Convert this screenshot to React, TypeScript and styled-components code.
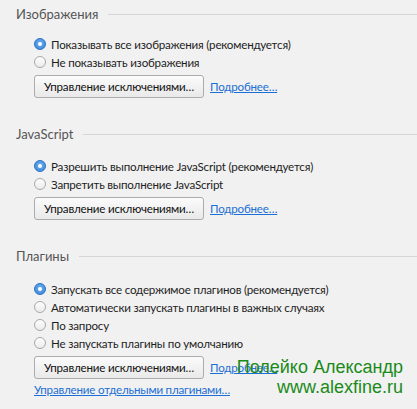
import styled, { createGlobalStyle } from "styled-components";

const GlobalStyle = createGlobalStyle`
  html, body {
    margin: 0;
    padding: 0;
    background: #f0f0f0;
  }
  body {
    font-family: Lato, "Noto Sans", sans-serif;
    font-size: 11.6px;
    letter-spacing: -0.2px;
    color: #1e1e1e;
  }
`

const Page = styled.div`
  position: relative;
  width: 417px;
  height: 409px;
  overflow: hidden;
  box-sizing: border-box;
  padding: 6px 0 0 16px;
  background: #f1f1f1;
`

const Section = styled.section`
  margin-bottom: 28px;
`

const TitleRow = styled.div`
  display: flex;
  align-items: center;
  gap: 10px;
  height: 16px;
`

const Title = styled.h3`
  margin: 0;
  font-weight: 400;
  font-size: 13px;
  letter-spacing: 0;
  line-height: 16px;
  color: #555;
  white-space: nowrap;
`

const Rule = styled.div`
  flex: 1;
  height: 1px;
  background: #d6d6d6;
`

const Body = styled.div<{ $top: number }>`
  display: flex;
  flex-direction: column;
  padding: ${p => p.$top}px 0 0 18px;
`

const Option = styled.label`
  display: flex;
  align-items: center;
  gap: 5px;
  height: 18px;
  white-space: nowrap;
`

const Radio = styled.span<{ $on?: boolean }>`
  position: relative;
  flex: none;
  box-sizing: border-box;
  width: 12px;
  height: 12px;
  border-radius: 50%;
  border: 1px solid ${p => (p.$on ? "#2c6fc4" : "#a8a8a8")};
  background: ${p =>
    p.$on
      ? "radial-gradient(circle at 50% 40%, #6aaef0, #3a86dc)"
      : "linear-gradient(#fdfdfd, #ececec)"};
  &::after {
    content: "";
    display: ${p => (p.$on ? "block" : "none")};
    position: absolute;
    left: 3px;
    top: 3px;
    width: 4px;
    height: 4px;
    border-radius: 50%;
    background: #fff;
  }
`

const Actions = styled.div`
  display: flex;
  align-items: center;
  gap: 6px;
  margin-top: 4px;
`

const Button = styled.button`
  box-sizing: border-box;
  width: 170px;
  height: 23px;
  padding: 0;
  border: 1px solid #acacac;
  border-radius: 3px;
  background: linear-gradient(#fbfbfb, #e9e9e9);
  font: inherit;
  letter-spacing: inherit;
  color: #111;
  white-space: nowrap;
`

const Link = styled.a`
  color: #1c6fd4;
  text-decoration: underline;
  cursor: pointer;
  white-space: nowrap;
`

const LinkRow = styled.div`
  margin-top: 4px;
  line-height: 14px;
`

const Watermark = styled.div`
  position: absolute;
  right: 14px;
  top: 357px;
  display: flex;
  flex-direction: column;
  align-items: flex-end;
  font-family: "Liberation Sans", Arial, sans-serif;
  font-size: 18px;
  line-height: 20px;
  letter-spacing: 0;
  color: #1a8a1a;
  pointer-events: none;
`

const MarkLine = styled.span`
  white-space: nowrap;
`

type Choice = { text: string; on?: boolean }

const sections: { title: string; top: number; options: Choice[]; extra?: string }[] = [
  {
    title: "Изображения",
    top: 13,
    options: [
      { text: "Показывать все изображения (рекомендуется)", on: true },
      { text: "Не показывать изображения" },
    ],
  },
  {
    title: "JavaScript",
    top: 15,
    options: [
      { text: "Разрешить выполнение JavaScript (рекомендуется)", on: true },
      { text: "Запретить выполнение JavaScript" },
    ],
  },
  {
    title: "Плагины",
    top: 16,
    options: [
      { text: "Запускать все содержимое плагинов (рекомендуется)", on: true },
      { text: "Автоматически запускать плагины в важных случаях" },
      { text: "По запросу" },
      { text: "Не запускать плагины по умолчанию" },
    ],
    extra: "Управление отдельными плагинами…",
  },
]

export default function App() {
  return (
    <>
      <GlobalStyle />
      <Page>
        {sections.map(s => (
          <Section key={s.title}>
            <TitleRow>
              <Title>{s.title}</Title>
              <Rule />
            </TitleRow>
            <Body $top={s.top}>
              {s.options.map(o => (
                <Option key={o.text}>
                  <Radio $on={o.on} />
                  {o.text}
                </Option>
              ))}
              <Actions>
                <Button>Управление исключениями…</Button>
                <Link>Подробнее…</Link>
              </Actions>
              {s.extra && (
                <LinkRow>
                  <Link>{s.extra}</Link>
                </LinkRow>
              )}
            </Body>
          </Section>
        ))}
        <Watermark>
          <MarkLine>Полейко Александр</MarkLine>
          <MarkLine>www.alexfine.ru</MarkLine>
        </Watermark>
      </Page>
    </>
  )
}
